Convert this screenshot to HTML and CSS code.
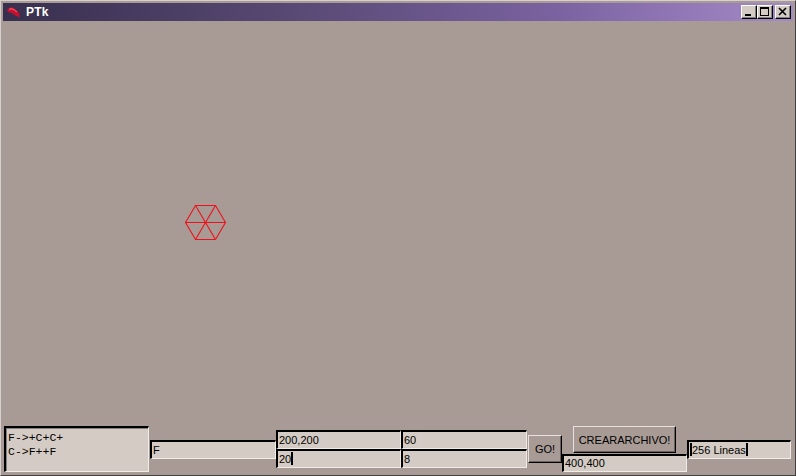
FILE: index.html
```html
<!DOCTYPE html>
<html>
<head>
<meta charset="utf-8">
<link rel="stylesheet" href="styles.css">
</head>
<body>
<div class="window">
  <div class="titlebar">
    <svg class="appicon" width="14" height="12" viewBox="0 0 14 12">
      <path d="M0 4 L4 1 L8 3 L12 7 L13 11 L9 10 L5 7 L1 6 Z" fill="#c8102e"/>
      <path d="M2 3 L6 3 L10 6" stroke="#ff6070" stroke-width="1" fill="none"/>
    </svg>
    <span class="title">PTk</span>
    <div class="caption-buttons">
      <div class="cbtn"><svg width="12" height="10" viewBox="0 0 12 10"><rect x="2" y="7" width="6" height="2" fill="#000"/></svg></div>
      <div class="cbtn"><svg width="12" height="10" viewBox="0 0 12 10"><rect x="1.5" y="0.5" width="8" height="8" fill="none" stroke="#000"/><rect x="1" y="0" width="9" height="2" fill="#000"/></svg></div>
      <div class="cbtn close"><svg width="12" height="10" viewBox="0 0 12 10"><path d="M2 1 L9 8 M9 1 L2 8" stroke="#000" stroke-width="1.6"/></svg></div>
    </div>
  </div>
  <div class="canvas">
    <svg class="drawing" width="792" height="404" viewBox="0 22 792 404">
      <g stroke="#f0101c" stroke-width="1.1" fill="none">
        <polygon points="184.5,223.5 194.5,206.5 214.5,206.5 224.5,223.5 214.5,240.5 194.5,240.5"/>
        <line x1="184.5" y1="223.5" x2="224.5" y2="223.5"/>
        <line x1="194.5" y1="206.5" x2="214.5" y2="240.5"/>
        <line x1="214.5" y1="206.5" x2="194.5" y2="240.5"/>
      </g>
    </svg>
  </div>
  <div class="controls">
    <div class="textarea">F-&gt;+C+C+<br>C-&gt;F++F</div>
    <div class="col center"><div class="entry w126">F</div></div>
    <div class="col stack">
      <div class="entry w125">200,200</div>
      <div class="entry w125">20<span class="caret"></span></div>
    </div>
    <div class="col stack">
      <div class="entry w126">60</div>
      <div class="entry w126">8</div>
    </div>
    <div class="col center"><div class="button go">GO!</div></div>
    <div class="col col6">
      <div class="button crear">CREARARCHIVO!</div>
      <div class="entry e400">400,400</div>
    </div>
    <div class="col center"><div class="entry w104"><span class="caret"></span>256 Lineas<span class="caret"></span></div></div>
  </div>
</div>
</body>
</html>
```
FILE: styles.css
```css
html, body {
  margin: 0;
  padding: 0;
  background: #a89a94;
}
.window {
  width: 796px;
  height: 476px;
  box-sizing: border-box;
  border-top: 1px solid #d8d0cc;
  border-left: 1px solid #d8d0cc;
  border-right: 1px solid #404040;
  border-bottom: 1px solid #404040;
  padding: 2px 2px 0 2px;
  display: flex;
  flex-direction: column;
  background: #a89a94;
  font-family: "Liberation Sans", Arial, sans-serif;
  overflow: hidden;
}
.titlebar {
  height: 18px;
  flex: none;
  display: flex;
  align-items: center;
  background: linear-gradient(to right, #382f4e 0%, #574872 35%, #7a62a0 70%, #a68ac8 100%);
  color: #fff;
  padding-left: 4px;
}
.appicon {
  flex: none;
  margin-right: 5px;
}
.title {
  font-weight: bold;
  font-size: 12px;
  letter-spacing: 0.2px;
}
.caption-buttons {
  margin-left: auto;
  display: flex;
  padding-right: 2px;
}
.cbtn {
  width: 16px;
  height: 14px;
  box-sizing: border-box;
  background: #d4ccc4;
  border-top: 1px solid #fff;
  border-left: 1px solid #fff;
  border-right: 1px solid #000;
  border-bottom: 1px solid #000;
  box-shadow: inset -1px -1px 0 #808080;
  display: flex;
  align-items: center;
  justify-content: center;
}
.cbtn.close {
  margin-left: 2px;
}
.canvas {
  flex: 1;
  position: relative;
}
.drawing {
  position: absolute;
  left: -2px;
  top: 0;
}
.controls {
  flex: none;
  height: 46px;
  display: flex;
  align-items: stretch;
  padding: 0 0 3px 1px;
  font-size: 11px;
  color: #000;
}
.col {
  display: flex;
  flex-direction: column;
}
.center {
  justify-content: center;
}
.stack {
  justify-content: center;
}
.textarea {
  width: 145px;
  box-sizing: border-box;
  background: #d4ccc4;
  border-top: 2px solid #000;
  border-left: 2px solid #000;
  border-right: 1px solid #f0ece8;
  border-bottom: 1px solid #f0ece8;
  box-shadow: inset 1px 1px 0 #808080;
  font-family: "Liberation Mono", "Courier New", monospace;
  font-size: 11.5px;
  line-height: 14px;
  padding: 3px 2px 0 2px;
  margin-right: 1px;
}
.entry {
  height: 19px;
  box-sizing: border-box;
  background: #d4ccc4;
  border-top: 2px solid #000;
  border-left: 2px solid #000;
  border-right: 1px solid #f0ece8;
  border-bottom: 1px solid #f0ece8;
  padding-left: 1px;
  line-height: 16px;
  white-space: nowrap;
  overflow: hidden;
}
.w126 { width: 126px; }
.w125 { width: 125px; }
.w104 { width: 104px; }
.caret {
  display: inline-block;
  width: 2px;
  height: 13px;
  background: #000;
  vertical-align: -2px;
}
.button {
  box-sizing: border-box;
  background: #a89a94;
  border-top: 1px solid #e8e0dc;
  border-left: 1px solid #e8e0dc;
  border-right: 1px solid #000;
  border-bottom: 1px solid #000;
  box-shadow: inset -1px -1px 0 #6c6260;
  display: flex;
  align-items: center;
  justify-content: center;
  font-size: 11px;
}
.go {
  width: 34px;
  height: 28px;
  margin-left: 1px;
}
.col6 {
  width: 125px;
  align-items: center;
  justify-content: space-between;
}
.crear {
  width: 103px;
  height: 27px;
}
.e400 {
  width: 125px;
  height: 18px;
  line-height: 15px;
}
```
